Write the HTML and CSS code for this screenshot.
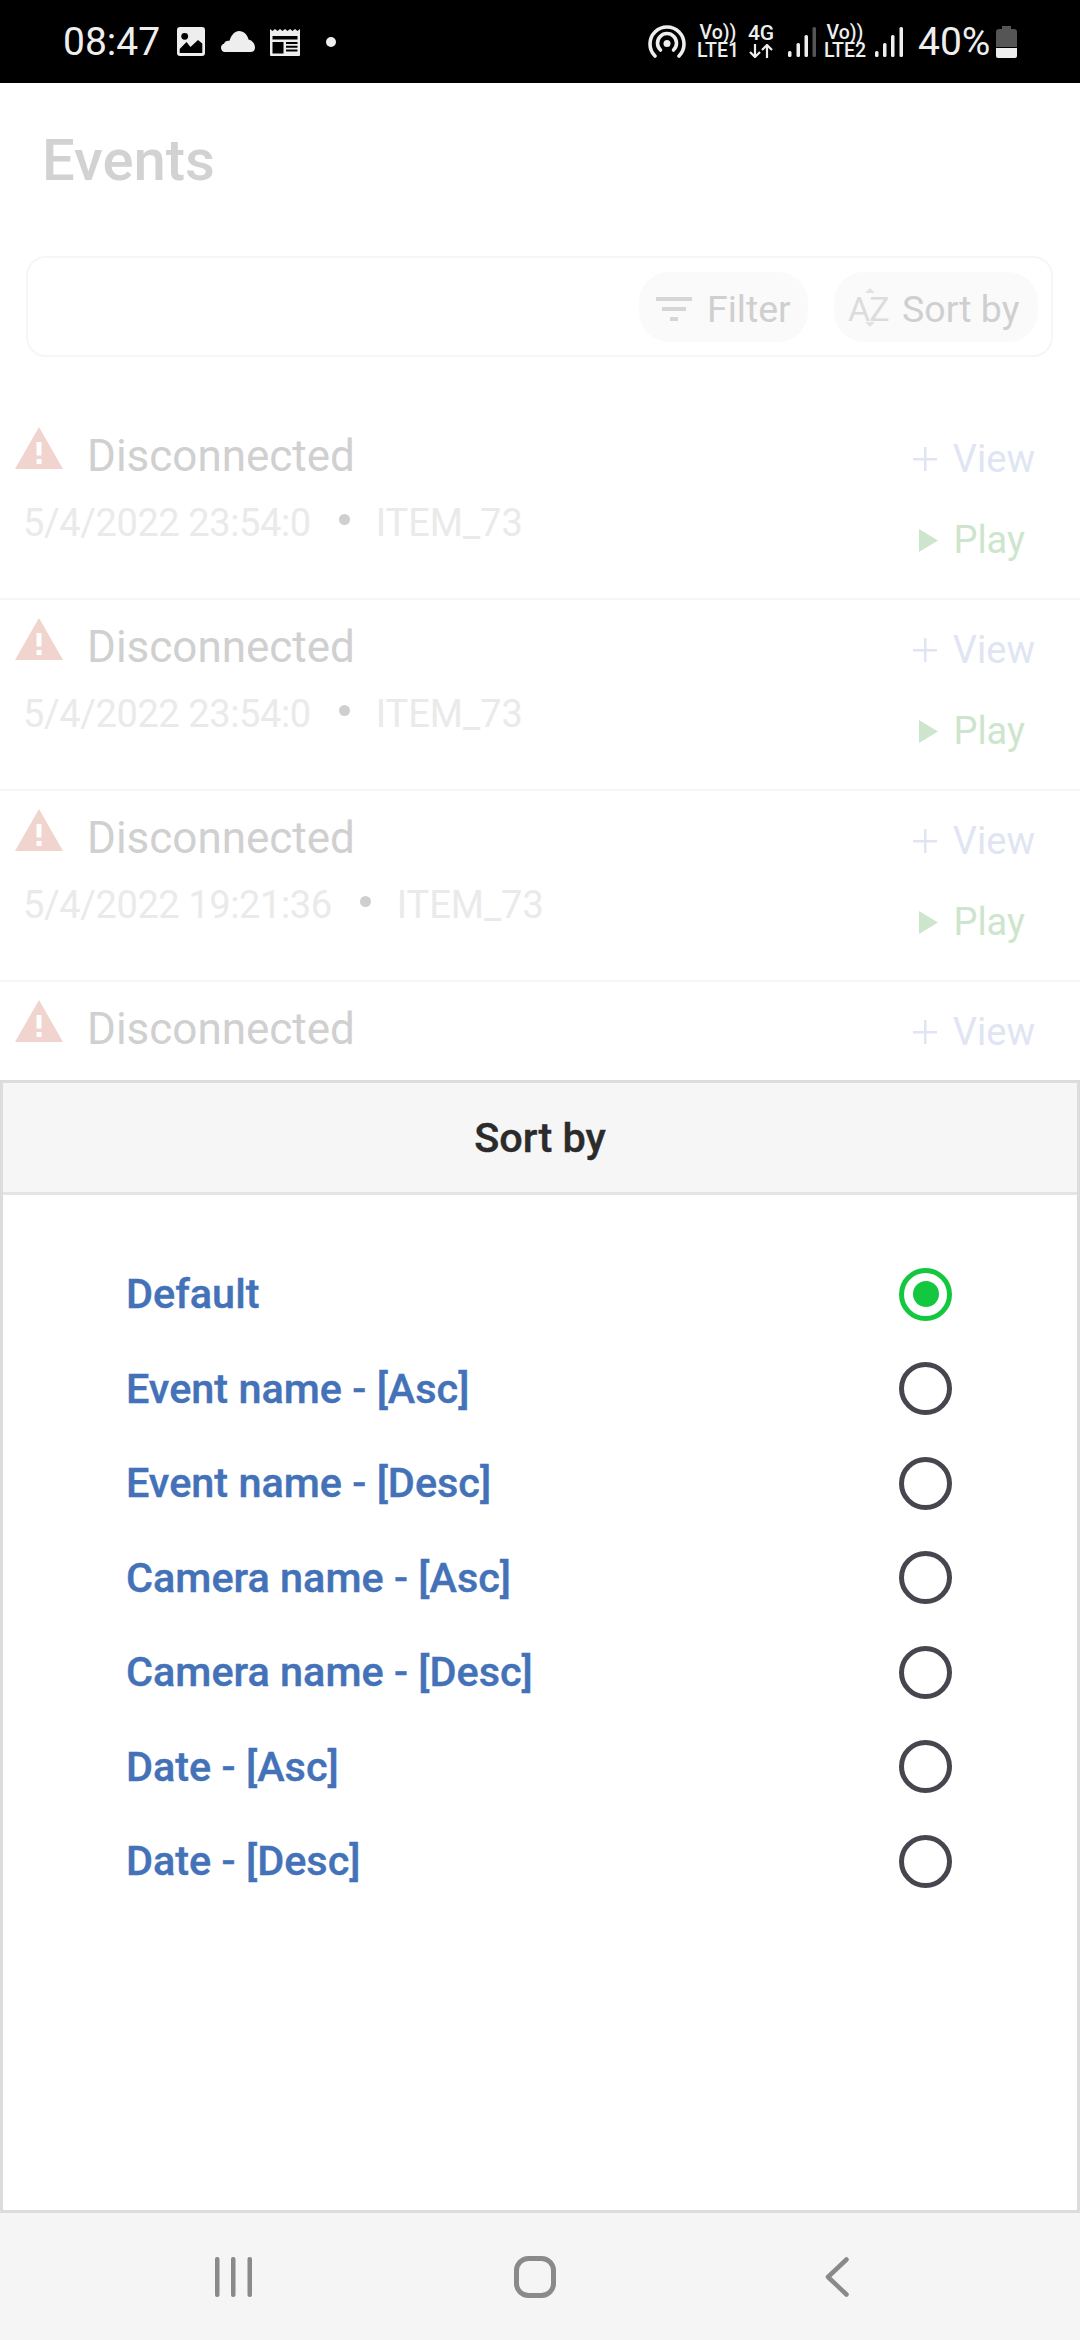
FILE: index.html
```html
<!DOCTYPE html>
<html lang="en">
<head>
<meta charset="utf-8">
<title>Events</title>
<link rel="stylesheet" href="styles.css">
</head>
<body>
<div class="app">
  <header class="status">
    <div class="status-left">
      <span class="clock">08:47</span>
      <svg class="ic-image" viewBox="0 0 28 29"><path fill="#eee" fill-rule="evenodd" d="M3 0h22a3 3 0 0 1 3 3v23a3 3 0 0 1-3 3H3a3 3 0 0 1-3-3V3a3 3 0 0 1 3-3zM2.700 26h22.600V16.500L21 13l-7.500 7-4-5-6.800 7z"/><circle cx="7.700" cy="9.300" r="3.400" fill="#000"/></svg>
      <svg class="ic-cloud" viewBox="0 0 34 21"><path fill="#eee" d="M4.500 21a4.200 4.200 0 0 1-1.500-8.200c.800-2.200 3-3.600 5.500-3C10.500 3.500 14 0 18 0c5 0 8.500 3.800 9.500 8.500 3.800 1 6.500 4 6.500 8 0 3-1.800 4.500-4.500 4.500z"/></svg>
      <svg class="ic-news" viewBox="0 0 30 28"><path fill="#eee" fill-rule="evenodd" d="M0 1l2.500 2L5 1l2.500 2L10 1l2.500 2L15 1l2.500 2L20 1l2.500 2L25 1l2.500 2L30 1v26a1 1 0 0 1-1 1H1a1 1 0 0 1-1-1zM2.500 8v17.500h11V14H2.500v-2.500h25V8zM16 14v2h11.500v-2zm0 3.700v2h11.500v-2zm0 3.800v2h11.500v-2z"/></svg>
      <span class="dot"></span>
    </div>
    <div class="status-right">
      <svg class="ic-hotspot" viewBox="0 0 38 33"><g fill="none" stroke="#eee" stroke-width="3.600" stroke-linecap="round"><path d="M7 31A17 17 0 1 1 31 31"/><path d="M12.500 25a9.500 9.500 0 1 1 13 0"/></g><circle cx="19" cy="18.500" r="3.500" fill="#eee"/></svg>
      <div class="net net-lte1"><span>Vo))</span><span>LTE1</span></div>
      <div class="net net-4g"><span>4G</span><svg class="ic-arrows" viewBox="0 0 24 14"><g fill="none" stroke="#eee" stroke-width="2.200"><path d="M6 0v13M1 8l5 5 5-5"/><path d="M18 14V1M13 6l5-5 5 5"/></g></svg></div>
      <svg class="ic-signal" viewBox="0 0 28 30"><g fill="#eee"><rect x="0" y="24" width="3.500" height="6" rx="1.500"/><rect x="8.500" y="16" width="3.500" height="14" rx="1.500"/><rect x="16.500" y="8" width="3.500" height="22" rx="1.500"/><rect x="24.500" y="0" width="3.500" height="30" rx="1.500" fill="#555"/></g></svg>
      <div class="net net-lte2"><span>Vo))</span><span>LTE2</span></div>
      <svg class="ic-signal2" viewBox="0 0 28 30"><g fill="#eee"><rect x="0" y="24" width="3.500" height="6" rx="1.500"/><rect x="8" y="16" width="3.500" height="14" rx="1.500"/><rect x="16" y="8" width="3.500" height="22" rx="1.500"/><rect x="24.500" y="0" width="3.500" height="30" rx="1.500"/></g></svg>
      <span class="pct">40%</span>
      <svg class="ic-battery" viewBox="0 0 21 32"><path fill="#555" d="M6 0h9v3h3a3 3 0 0 1 3 3v15H0V6a3 3 0 0 1 3-3h3z"/><path fill="#eee" d="M0 22h21v8a2 2 0 0 1-2 2H2a2 2 0 0 1-2-2z"/></svg>
    </div>
  </header>

  <main class="events">
    <h1 class="title">Events</h1>
    <div class="toolbar">
      <div class="pill pill-filter">
        <svg class="ic-filter" viewBox="0 0 36 24"><g fill="#d6d6d6"><rect x="0" y="0" width="36" height="4"/><rect x="6" y="10" width="24" height="4"/><rect x="14" y="20" width="8" height="4"/></g></svg>
        <span>Filter</span>
      </div>
      <div class="pill pill-sort">
        <span class="az"><span>A</span><span>Z</span></span>
        <span>Sort by</span>
      </div>
    </div>

    <section class="row">
      <div class="row-main">
        <div class="row-head">
          <svg class="ic-warn" viewBox="0 0 48 42"><path fill="#f0d4cd" fill-rule="evenodd" d="M24 0l24 42H0zM21.500 15v13.500h5V15zm0 17v5h5v-5z"/></svg>
          <span class="name">Disconnected</span>
        </div>
        <div class="meta"><span class="date">5/4/2022 23:54:0</span><span class="sep"></span><span>ITEM_73</span></div>
      </div>
      <div class="row-actions">
        <div class="act view"><svg class="ic-plus" viewBox="0 0 24 24"><path fill="#dfe5f2" d="M11 0h2.500v11H24v2.500H13.500V24H11V13.500H0V11h11z"/></svg><span>View</span></div>
        <div class="act play"><svg class="ic-play" viewBox="0 0 19 23"><path fill="#cde5cc" d="M0 0l19 11.500L0 23z"/></svg><span>Play</span></div>
      </div>
    </section>

    <section class="row">
      <div class="row-main">
        <div class="row-head">
          <svg class="ic-warn" viewBox="0 0 48 42"><path fill="#f0d4cd" fill-rule="evenodd" d="M24 0l24 42H0zM21.500 15v13.500h5V15zm0 17v5h5v-5z"/></svg>
          <span class="name">Disconnected</span>
        </div>
        <div class="meta"><span class="date">5/4/2022 23:54:0</span><span class="sep"></span><span>ITEM_73</span></div>
      </div>
      <div class="row-actions">
        <div class="act view"><svg class="ic-plus" viewBox="0 0 24 24"><path fill="#dfe5f2" d="M11 0h2.500v11H24v2.500H13.500V24H11V13.500H0V11h11z"/></svg><span>View</span></div>
        <div class="act play"><svg class="ic-play" viewBox="0 0 19 23"><path fill="#cde5cc" d="M0 0l19 11.500L0 23z"/></svg><span>Play</span></div>
      </div>
    </section>

    <section class="row">
      <div class="row-main">
        <div class="row-head">
          <svg class="ic-warn" viewBox="0 0 48 42"><path fill="#f0d4cd" fill-rule="evenodd" d="M24 0l24 42H0zM21.500 15v13.500h5V15zm0 17v5h5v-5z"/></svg>
          <span class="name">Disconnected</span>
        </div>
        <div class="meta"><span class="date">5/4/2022 19:21:36</span><span class="sep"></span><span>ITEM_73</span></div>
      </div>
      <div class="row-actions">
        <div class="act view"><svg class="ic-plus" viewBox="0 0 24 24"><path fill="#dfe5f2" d="M11 0h2.500v11H24v2.500H13.500V24H11V13.500H0V11h11z"/></svg><span>View</span></div>
        <div class="act play"><svg class="ic-play" viewBox="0 0 19 23"><path fill="#cde5cc" d="M0 0l19 11.500L0 23z"/></svg><span>Play</span></div>
      </div>
    </section>

    <section class="row">
      <div class="row-main">
        <div class="row-head">
          <svg class="ic-warn" viewBox="0 0 48 42"><path fill="#f0d4cd" fill-rule="evenodd" d="M24 0l24 42H0zM21.500 15v13.500h5V15zm0 17v5h5v-5z"/></svg>
          <span class="name">Disconnected</span>
        </div>
      </div>
      <div class="row-actions">
        <div class="act view"><svg class="ic-plus" viewBox="0 0 24 24"><path fill="#dfe5f2" d="M11 0h2.500v11H24v2.500H13.500V24H11V13.500H0V11h11z"/></svg><span>View</span></div>
      </div>
    </section>
  </main>

  <section class="sheet">
    <h2 class="sheet-title">Sort by</h2>
    <ul class="options">
      <li class="option"><span>Default</span><span class="radio on"></span></li>
      <li class="option"><span>Event name - [Asc]</span><span class="radio"></span></li>
      <li class="option"><span>Event name - [Desc]</span><span class="radio"></span></li>
      <li class="option"><span>Camera name - [Asc]</span><span class="radio"></span></li>
      <li class="option"><span>Camera name - [Desc]</span><span class="radio"></span></li>
      <li class="option"><span>Date - [Asc]</span><span class="radio"></span></li>
      <li class="option"><span>Date - [Desc]</span><span class="radio"></span></li>
    </ul>
  </section>

  <nav class="navbar">
    <svg class="ic-recent" viewBox="0 0 37 40"><g fill="#8a8a8a"><rect x="0" y="0" width="4.500" height="40" rx="2"/><rect x="16" y="0" width="4.500" height="40" rx="2"/><rect x="32.500" y="0" width="4.500" height="40" rx="2"/></g></svg>
    <svg class="ic-home" viewBox="0 0 42 42"><rect x="2.500" y="2.500" width="37" height="37" rx="12" fill="none" stroke="#8a8a8a" stroke-width="5"/></svg>
    <svg class="ic-back" viewBox="0 0 24 40"><path d="M21.500 2.500L3 20l18.500 17.500" fill="none" stroke="#8a8a8a" stroke-width="4.500" stroke-linecap="round" stroke-linejoin="round"/></svg>
  </nav>
</div>
</body>
</html>
```

FILE: styles.css
```css
* { box-sizing: border-box; }
html, body { margin: 0; padding: 0; }
body { font-family: Roboto, "Liberation Sans", sans-serif; background: #fff; }
.app { width: 1080px; height: 2340px; display: flex; flex-direction: column; overflow: hidden; }

.status { height: 83px; flex: none; background: #000; color: #eee; display: flex; justify-content: space-between; align-items: center; padding: 0 63px; }
.status-left, .status-right { display: flex; align-items: center; }
.clock { font-size: 39px; width: 114px; line-height: 42px; }
.ic-image { width: 28px; height: 29px; margin-right: 16px; }
.ic-cloud { width: 34px; height: 21px; margin-right: 15px; }
.ic-news { width: 30px; height: 28px; margin-right: 26px; }
.dot { width: 10px; height: 10px; border-radius: 50%; background: #eee; }

.ic-hotspot { width: 38px; height: 33px; margin-right: 12px; }
.net { display: flex; flex-direction: column; align-items: center; font-size: 19.500px; font-weight: 500; line-height: 17.500px; width: 40px; }
.net-lte1 { margin-right: 10px; }
.net-4g { width: 26px; margin-right: 14px; font-size: 21px; }
.ic-arrows { width: 24px; height: 14px; margin-top: 2px; }
.ic-signal { width: 28px; height: 30px; margin-right: 9px; }
.net-lte2 { margin-right: 10px; }
.ic-signal2 { width: 28px; height: 30px; margin-right: 15px; }
.pct { font-size: 39px; line-height: 42px; width: 72px; margin-right: 6px; white-space: nowrap; }
.ic-battery { width: 21px; height: 32px; }

.events { flex: 1; min-height: 0; overflow: hidden; }
.title { margin: 0; padding: 47px 0 0 42px; font-size: 58px; line-height: 60px; font-weight: 500; color: #d2d2d2; }
.toolbar { margin: 66px 27px 0 26px; height: 101px; border: 2px solid #f6f6f6; border-radius: 20px; display: flex; justify-content: flex-end; align-items: center; gap: 26px; padding-right: 13px; }
.pill { height: 70px; padding-top: 5px; border-radius: 30px; background: #fafafa; color: #cfcfcf; font-size: 37.500px; display: flex; align-items: center; }
.pill-filter { width: 169px; padding-left: 17px; gap: 15px; }
.ic-filter { width: 36px; height: 24px; }
.pill-sort { width: 204px; padding-left: 14px; gap: 13px; }
.az { position: relative; display: flex; font-size: 34px; color: #dcdcdc; width: 41px; line-height: 40px; letter-spacing: -1px; }
.az::before, .az::after { content: ""; position: absolute; left: 17px; border-left: 5px solid transparent; border-right: 5px solid transparent; }
.az::before { top: -1px; border-bottom: 5px solid #e2e2e2; }
.az::after { bottom: 2px; border-top: 5px solid #e2e2e2; }

.row { height: 191px; padding: 16px 45px 0 15px; display: flex; justify-content: space-between; border-bottom: 2px solid #f6f6f6; }
.toolbar + .row { margin-top: 52px; }
.row-head { display: flex; align-items: flex-end; gap: 24px; height: 44px; }
.ic-warn { width: 48px; height: 42px; }
.name { font-size: 44px; line-height: 30px; color: #d0d0d0; margin-bottom: -2px; }
.meta { display: flex; align-items: center; font-size: 38px; line-height: 44px; color: #eaeaea; margin: 32px 0 0 8px; }
.date { letter-spacing: -0.400px; }
.sep { width: 11px; height: 11px; border-radius: 50%; background: #cfcfcf; margin: 0 26px 0 28px; position: relative; top: -4px; }
.row-actions { display: flex; flex-direction: column; align-items: flex-end; gap: 37px; padding-top: 12px; }
.act { display: flex; align-items: center; font-size: 38px; line-height: 44px; }
.view { color: #dfe5f2; gap: 16px; }
.play { color: #cde5cc; gap: 15px; margin-right: 10px; }
.ic-plus { width: 24px; height: 24px; }
.ic-play { width: 19px; height: 23px; }

.sheet { height: 1133px; flex: none; border: 3px solid #dcdcdc; background: #fff; }
.sheet-title { margin: 0; height: 112px; background: #f6f6f6; border-bottom: 3px solid #e4e4e4; display: flex; align-items: center; justify-content: center; font-size: 41.400px; font-weight: 500; color: #2b2b2b; -webkit-text-stroke: 0.400px #2b2b2b; }
.options { list-style: none; margin: 0; padding: 52px 0 0 123px; }
.option { height: 94.500px; display: flex; align-items: center; justify-content: space-between; padding-right: 125px; font-size: 41.400px; font-weight: 500; color: #4472b8; -webkit-text-stroke: 0.400px #4472b8; }
.radio { width: 53px; height: 53px; border-radius: 50%; border: 5px solid #46464e; flex: none; }
.radio.on { border-color: #13c83f; display: flex; align-items: center; justify-content: center; }
.radio.on::after { content: ""; width: 26px; height: 26px; border-radius: 50%; background: #13c83f; }

.navbar { height: 127px; flex: none; background: #f5f5f5; display: flex; align-items: center; padding: 0 0 0 215px; }
.ic-recent { width: 37px; height: 40px; margin-right: 262px; }
.ic-home { width: 42px; height: 42px; margin-right: 269px; }
.ic-back { width: 24px; height: 40px; }
```
